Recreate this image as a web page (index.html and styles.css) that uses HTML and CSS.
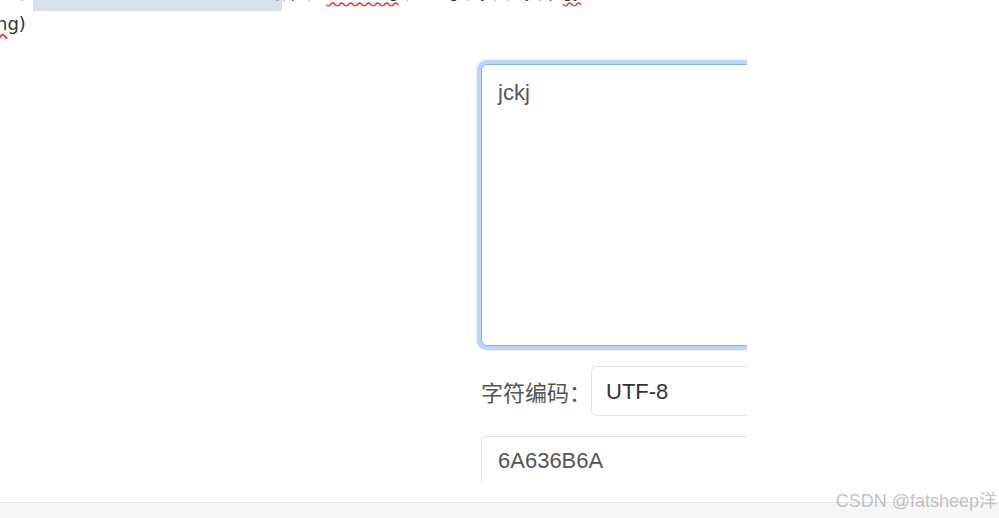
FILE: index.html
```html
<!DOCTYPE html>
<html lang="zh-CN">
  <head>
    <meta charset="UTF-8" />
    <meta name="viewport" content="width=device-width, initial-scale=1.0" />
    <title>字符串转十六进制</title>
    <link rel="stylesheet" href="styles.css">
  </head>
  <body>
    <!-- code above the form, cut off at the top -->
    <div class="code-top">
      <div class="code-shift">
        <span class="dark">■</span> [ <span class="sel">String str = getHexString(bytes)</span> ]( p ( t <span class="typo">hexString</span> ( String ( ty ) ( by ) p <span class="typo">gy</span>
      </div>
    </div>
    <div class="code-line"><span class="typo">n</span>g)</div>

    <div class="panel">
      <div class="form">
        <textarea class="source" spellcheck="false">jckj</textarea>

        <div class="field">
          <label for="charset">字符编码：</label>
          <select id="charset">
            <option>UTF-8</option>
            <option>GBK</option>
          </select>
        </div>

        <input class="result" type="text" value="6A636B6A" readonly />
      </div>
    </div>

    <div class="bottom-bar"></div>
    <div class="watermark">CSDN @fatsheep洋</div>
  </body>
</html>
```

FILE: styles.css
```css
:root {
  --text: #555;
  --text-dark: #333;
  --border: #e3e3e3;
  --focus: #82b1f6;
  --focus-ring: #bdd5fa;
}

html,
body {
  height: 518px;
  overflow: hidden;
}

body {
  margin: 0;
  position: relative;
  background: #fff;
  font-family: "Liberation Sans", "Noto Sans CJK SC", sans-serif;
  color: var(--text);
}

/* code above the form, only the bottom edge is visible */
.code-top {
  height: 11px;
  overflow: hidden;
  background: linear-gradient(to right, transparent 33px, #d9e0e7 33px, #d9e0e7 282px, transparent 282px);
}

.code-shift {
  margin-top: -19px;
  white-space: nowrap;
  font: 15px/24px "DejaVu Sans", sans-serif;
  color: #333;
}

.code-shift .sel {
  display: inline-block;
  width: 240px;
  color: transparent;
}

.typo {
  text-decoration: underline wavy #e33;
  text-underline-offset: 3px;
}

.code-line {
  font: 18px/26px "DejaVu Sans", sans-serif;
  color: #333;
  text-indent: -4px;
}

/* form, cut off on the right and at the bottom */
.panel {
  box-sizing: border-box;
  width: 271px;
  height: 424px;
  margin: 22px 0 0 476px;
  padding: 5px 0 0 5px;
  overflow: hidden;
}

.form {
  width: 560px;
}

.source,
.result,
select {
  box-sizing: border-box;
  font-family: inherit;
  font-size: 22px;
  line-height: 31px;
  color: var(--text);
  background: #fff;
  outline: none;
}

.source {
  display: block;
  width: 100%;
  height: 282px;
  margin: 0;
  padding: 12px 16px;
  border: 1px solid var(--focus);
  border-radius: 6px;
  box-shadow: 0 0 0 4px var(--focus-ring), 0 0 2px 4px var(--focus-ring);
  resize: none;
}

.field {
  display: flex;
  align-items: center;
  margin-top: 20px;
}

.field label {
  font-size: 22px;
  white-space: nowrap;
}

select {
  flex: 1;
  height: 50px;
  padding: 0 14px;
  border: 1px solid var(--border);
  border-radius: 5px;
  color: var(--text-dark);
  appearance: none;
  -webkit-appearance: none;
}

.result {
  display: block;
  width: 100%;
  height: 50px;
  margin-top: 20px;
  padding: 9px 16px;
  border: 1px solid var(--border);
  border-radius: 5px;
}

.bottom-bar {
  height: 16px;
  margin-top: 19px;
  border-top: 1px solid #e6e6e6;
  background: #f6f6f6;
}

.watermark {
  position: absolute;
  right: 2px;
  bottom: 8px;
  font-size: 18px;
  line-height: 1;
  color: rgba(170, 170, 170, 0.7);
  white-space: nowrap;
}
```
